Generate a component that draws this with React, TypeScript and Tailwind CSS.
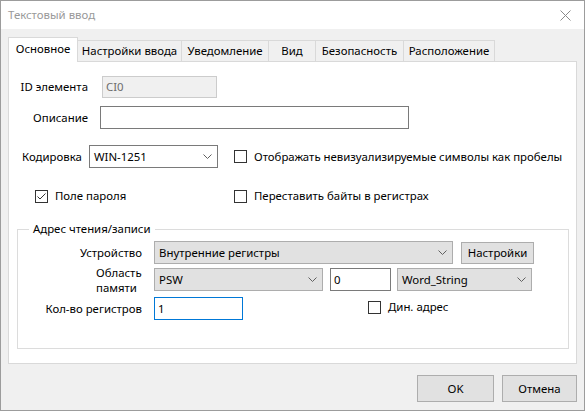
import type { ReactNode } from "react";

const TABS = [
  { label: "Основное", w: "w-[70px]" },
  { label: "Настройки ввода", w: "w-[105px]" },
  { label: "Уведомление", w: "w-[88px]" },
  { label: "Вид", w: "w-[48px]" },
  { label: "Безопасность", w: "w-[89px]" },
  { label: "Расположение", w: "w-[92px]" },
];

function Chevron() {
  return (
    <svg width="9" height="5" viewBox="0 0 9 5" className="shrink-0">
      <polyline points="0.5,0.5 4.5,4.5 8.5,0.5" fill="none" stroke="#606060" strokeWidth="1" />
    </svg>
  );
}

function Combo({ value, w, flat = false }: { value: string; w: string; flat?: boolean }) {
  return (
    <div
      className={`${w} h-[23px] flex items-center justify-between pl-[4px] pr-[5px] border ${
        flat ? "bg-white border-[#7a7a7a]" : "bg-[#e1e1e1] border-[#adadad]"
      }`}
    >
      <span>{value}</span>
      <Chevron />
    </div>
  );
}

function Check({ checked = false, children }: { checked?: boolean; children: ReactNode }) {
  return (
    <div className="flex items-center gap-[7px] whitespace-nowrap">
      <div className="w-[13px] h-[13px] shrink-0 border border-[#333333] bg-white flex items-center justify-center">
        {checked && (
          <svg width="11" height="11" viewBox="0 0 11 11">
            <polyline points="1.5,5.5 4,8 9.5,2.5" fill="none" stroke="#333333" strokeWidth="1" />
          </svg>
        )}
      </div>
      <span>{children}</span>
    </div>
  );
}

function Button({ children, w }: { children: ReactNode; w: string }) {
  return (
    <div className={`${w} h-[27px] flex items-center justify-center bg-[#e1e1e1] border border-[#adadad]`}>
      {children}
    </div>
  );
}

export default function App() {
  return (
    <div className="w-[585px] h-[411px] flex flex-col border border-[#9c9c9c] bg-[#f0f0f0] text-[11.4px] leading-[16px] text-black font-['Noto_Sans',sans-serif] whitespace-nowrap overflow-hidden">
      {/* title bar */}
      <div className="h-[28px] shrink-0 bg-white flex items-center justify-between pl-[7px] pr-[13px] text-[#999999]">
        <span>Текстовый ввод</span>
        <svg width="11" height="11" viewBox="0 0 11 11">
          <path d="M0.5 0.5 L10.5 10.5 M10.5 0.5 L0.5 10.5" stroke="#8a8a8a" strokeWidth="1" />
        </svg>
      </div>

      <div className="flex flex-col px-[7px]">
        {/* tabs */}
        <div className="flex items-end mt-[8px]">
          {TABS.map((t, i) =>
            i === 0 ? (
              <div
                key={t.label}
                className={`${t.w} h-[25px] relative z-10 -mb-px bg-white border border-b-0 border-[#d9d9d9] flex items-start justify-center pt-[3px]`}
              >
                {t.label}
              </div>
            ) : (
              <div
                key={t.label}
                className={`${t.w} h-[21px] -ml-px border border-b-0 border-[#d9d9d9] flex items-center justify-center`}
              >
                {t.label}
              </div>
            ),
          )}
        </div>

        {/* tab page */}
        <div className="w-[569px] h-[303px] border border-[#d9d9d9] bg-white flex flex-col">
          <div className="flex items-center mt-[14px] h-[22px]">
            <span className="w-[79px] text-right">ID элемента</span>
            <div className="ml-[14px] w-[115px] h-[22px] bg-[#f0f0f0] border border-[#cccccc] pl-[3px] flex items-center text-[#6d6d6d]">
              CI0
            </div>
          </div>

          <div className="flex items-center mt-[8px] h-[23px]">
            <span className="w-[79px] text-right">Описание</span>
            <div className="ml-[12px] w-[309px] h-[23px] bg-white border border-[#7a7a7a]" />
          </div>

          <div className="flex items-center mt-[16px] h-[23px]">
            <span className="ml-[13px] w-[67px]">Кодировка</span>
            <Combo value="WIN-1251" w="w-[129px]" flat />
            <div className="ml-[16px]">
              <Check>Отображать невизуализируемые символы как пробелы</Check>
            </div>
          </div>

          <div className="flex items-center mt-[20px] h-[16px]">
            <div className="ml-[26px] w-[199px]">
              <Check checked>Поле пароля</Check>
            </div>
            <Check>Переставить байты в регистрах</Check>
          </div>

          {/* read/write address group */}
          <fieldset className="ml-[8px] mt-[17px] w-[552px] border border-[#dcdcdc] pb-[28px]">
            <legend className="ml-[11px] px-[4px] leading-[16px]">Адрес чтения/записи</legend>

            <div className="flex items-center mt-[4px] h-[23px]">
              <span className="w-[124px] text-right">Устройство</span>
              <div className="ml-[12px]">
                <Combo value="Внутренние регистры" w="w-[299px]" />
              </div>
              <div className="ml-[8px] w-[73px] h-[22px] flex items-center justify-center bg-[#e1e1e1] border border-[#adadad]">
                Настройки
              </div>
            </div>

            <div className="flex items-center mt-[4px] h-[23px]">
              <div className="w-[124px] flex justify-end">
                <span className="w-[46px] leading-[15px]">
                  Область
                  <br />
                  памяти
                </span>
              </div>
              <div className="ml-[12px]">
                <Combo value="PSW" w="w-[169px]" />
              </div>
              <div className="ml-[7px] w-[61px] h-[23px] bg-white border border-[#7a7a7a] pl-[3px] flex items-center">
                0
              </div>
              <div className="ml-[6px]">
                <Combo value="Word_String" w="w-[135px]" />
              </div>
            </div>

            <div className="flex items-center mt-[6px] h-[23px]">
              <span className="w-[124px] text-right">Кол-во регистров</span>
              <div className="ml-[12px] w-[89px] h-[23px] bg-white border border-[#0078d7] pl-[3px] flex items-center">
                1
              </div>
              <div className="ml-[125px] -mt-[3px]">
                <Check>Дин. адрес</Check>
              </div>
            </div>
          </fieldset>
        </div>

        {/* dialog buttons */}
        <div className="flex justify-end gap-[8px] mt-[11px] w-[569px]">
          <Button w="w-[77px]">OK</Button>
          <Button w="w-[75px]">Отмена</Button>
        </div>
      </div>
    </div>
  );
}
